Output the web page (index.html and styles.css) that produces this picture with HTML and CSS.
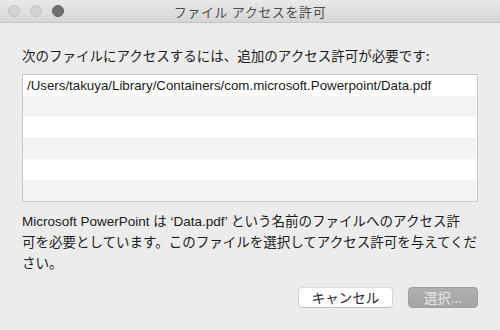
FILE: index.html
```html
<!DOCTYPE html>
<html lang="ja">
<head>
<meta charset="utf-8">
<link rel="stylesheet" href="styles.css">
</head>
<body>
<div class="window">
  <div class="titlebar">
    <div class="lights">
      <span class="light off"></span>
      <span class="light off"></span>
      <span class="light dark"></span>
    </div>
    <div class="title">ファイル アクセスを許可</div>
  </div>
  <div class="content">
    <div class="label">次のファイルにアクセスするには、追加のアクセス許可が必要です:</div>
    <div class="list">
      <div class="row">/Users/takuya/Library/Containers/com.microsoft.Powerpoint/Data.pdf</div>
      <div class="row alt"></div>
      <div class="row"></div>
      <div class="row alt"></div>
      <div class="row"></div>
      <div class="row alt"></div>
    </div>
    <div class="desc">Microsoft PowerPoint は ‘Data.pdf’ という名前のファイルへのアクセス許<br>可を必要としています。このファイルを選択してアクセス許可を与えてくだ<br>さい。</div>
    <div class="buttons">
      <button class="btn cancel">キャンセル</button>
      <button class="btn select">選択...</button>
    </div>
  </div>
</div>
</body>
</html>
```
FILE: styles.css
```css
* { box-sizing: border-box; }
html, body { margin: 0; padding: 0; }
body {
  width: 500px;
  height: 330px;
  background: #ececec;
  font-family: "Liberation Sans", "Noto Sans CJK JP", sans-serif;
  font-size: 13.5px;
  color: #222;
  overflow: hidden;
}
.window {
  width: 500px;
  height: 330px;
  background: #ececec;
}
.titlebar {
  position: relative;
  height: 23px;
  background: linear-gradient(#e9e9e9, #d6d6d6);
  border-bottom: 1px solid #c4c4c4;
  display: flex;
  align-items: center;
  justify-content: center;
}
.lights {
  position: absolute;
  left: 8px;
  top: 5px;
  display: flex;
  gap: 10px;
}
.light {
  width: 12px;
  height: 12px;
  border-radius: 50%;
}
.light.off {
  background: #d3d3d3;
  border: 1px solid #c2c2c2;
}
.light.dark {
  background: #707072;
  border: 1px solid #626264;
}
.title {
  font-family: "Noto Sans CJK JP", sans-serif;
  font-size: 13px;
  color: #4a4a4a;
  letter-spacing: 0.6px;
}
.content {
  padding: 22px 22px 0 22px;
}
.label {
  font-family: "Noto Sans CJK JP", sans-serif;
  line-height: 21px;
  color: #1a1a1a;
}
.list {
  margin-top: 8px;
  border: 1px solid #c8c8c8;
  background: #fff;
}
.row {
  height: 21px;
  line-height: 21px;
  padding-left: 4px;
  font-size: 13.3px;
  color: #1a1a1a;
  white-space: nowrap;
}
.row.alt { background: #f3f3f3; }
.desc {
  margin-top: 9px;
  line-height: 21px;
  color: #1a1a1a;
  white-space: nowrap;
}
.buttons {
  display: flex;
  justify-content: flex-end;
  gap: 15px;
  margin-top: 13px;
}
.btn {
  height: 21px;
  border-radius: 4px;
  font-family: "Noto Sans CJK JP", sans-serif;
  font-size: 13.5px;
  padding: 0;
  line-height: 19px;
}
.cancel {
  width: 95px;
  background: #fff;
  border: 1px solid #d2d2d2;
  border-top-color: #dadada;
  border-bottom-color: #c0c0c0;
  color: #262626;
}
.select {
  width: 70px;
  background: linear-gradient(#b0b0b0, #a4a4a4);
  border: 1px solid #9e9e9e;
  color: #e8e8e8;
}
```
